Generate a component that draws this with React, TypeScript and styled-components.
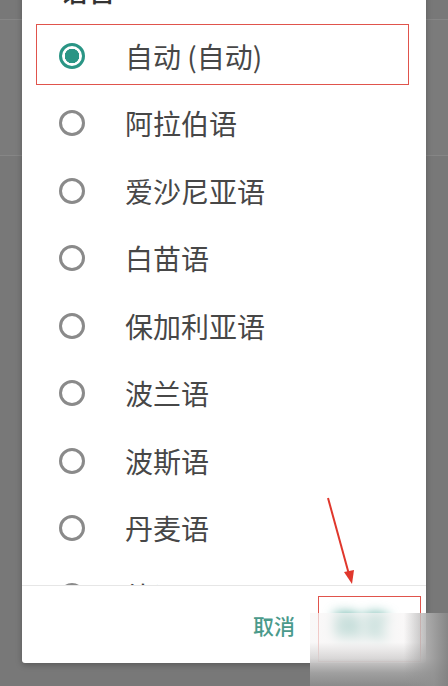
import { createGlobalStyle, styled } from "styled-components";

const GlobalStyle = createGlobalStyle`
  html, body {
    margin: 0;
    padding: 0;
    background: #787878;
  }
  body {
    font-family: "Noto Sans CJK SC", "Noto Sans", sans-serif;
  }
`;

const LANGUAGES = [
  "自动 (自动)",
  "阿拉伯语",
  "爱沙尼亚语",
  "白苗语",
  "保加利亚语",
  "波兰语",
  "波斯语",
  "丹麦语",
  "德语",
];

const App = () => {
  const selected = 0;

  return (
    <St.Page>
      <GlobalStyle />
      <St.Backdrop>
        <St.BackRow />
      </St.Backdrop>
      <St.Dialog>
        <St.Title>语言</St.Title>
        <St.List>
          {LANGUAGES.map((name, idx) => (
            <St.Row key={name} $marked={idx === selected}>
              <St.Radio $checked={idx === selected} />
              <St.Label>{name}</St.Label>
            </St.Row>
          ))}
        </St.List>
        <St.Footer>
          <St.TextButton>取消</St.TextButton>
          <St.TextButton $wide $marked>
            <St.Smudged>确定</St.Smudged>
          </St.TextButton>
        </St.Footer>
      </St.Dialog>

      {/* 스크린샷 위에 그려진 빨간 화살표 */}
      <St.Arrow width="40" height="100" viewBox="0 0 40 100">
        <line x1="6" y1="6" x2="28" y2="86" stroke="#e0372c" strokeWidth="2" />
        <polygon points="22,80 32,78 30,92" fill="#e0372c" />
      </St.Arrow>
      <St.Watermark />
    </St.Page>
  );
};

export default App;

const St = {
  Page: styled.div`
    position: relative;
    width: 448px;
    height: 686px;
    overflow: hidden;
    background: #787878;
  `,
  Backdrop: styled.div`
    position: absolute;
    inset: 0;
    padding-top: 19px;
  `,
  BackRow: styled.div`
    height: 135px;
    border-top: 1px solid #868686;
    border-bottom: 1px solid #868686;
    background: #7b7b7b;
  `,
  Dialog: styled.section`
    position: relative;
    margin: -38px 0 0 22px;
    width: 404px;
    height: 701px;
    background: #fff;
    border-radius: 3px;
    box-shadow: 0 2px 6px rgba(0, 0, 0, 0.25);
    display: flex;
    flex-direction: column;
  `,
  Title: styled.h2`
    margin: 0;
    height: 60px;
    padding: 14px 0 0 38px;
    box-sizing: border-box;
    font-size: 28px;
    font-weight: 500;
    line-height: 1;
    color: #333;
  `,
  List: styled.div`
    height: 563px;
    overflow: hidden;
    display: flex;
    flex-direction: column;
  `,
  Row: styled.div<{ $marked?: boolean }>`
    position: relative;
    flex: none;
    height: 67.5px;
    display: flex;
    align-items: center;
    padding-left: 37px;

    &::after {
      content: "";
      display: ${({ $marked }) => ($marked ? "block" : "none")};
      position: absolute;
      left: 14px;
      right: 17px;
      top: 2px;
      bottom: 5px;
      border: 1.5px solid #e0544c;
    }
  `,
  Radio: styled.span<{ $checked?: boolean }>`
    flex: none;
    width: 26px;
    height: 26px;
    box-sizing: border-box;
    border-radius: 50%;
    border: 3px solid ${({ $checked }) => ($checked ? "#2a9585" : "#8a8a8a")};
    background: ${({ $checked }) =>
      $checked ? "radial-gradient(circle, #2a9585 0 7px, transparent 7.5px)" : "none"};
  `,
  Label: styled.span`
    margin-left: 40px;
    font-size: 28px;
    color: #474747;
    line-height: 1;
  `,
  Footer: styled.footer`
    border-top: 1px solid #e6e6e6;
    display: flex;
    justify-content: flex-end;
    padding: 10px 5px 0 0;
    height: 78px;
    box-sizing: border-box;
  `,
  TextButton: styled.button<{ $wide?: boolean; $marked?: boolean }>`
    width: ${({ $wide }) => ($wide ? "103px" : "88px")};
    height: 66px;
    background: none;
    border: ${({ $marked }) => ($marked ? "1.5px solid #e0544c" : "none")};
    font-family: inherit;
    font-size: 21px;
    font-weight: 500;
    color: #4a9a8b;
    padding: 0 0 8px;
  `,
  Smudged: styled.span`
    display: inline-block;
    margin-right: 16px;
    filter: blur(6px);
    font-size: 28px;
    font-weight: 900;
    color: #2a9585;
  `,
  Arrow: styled.svg`
    position: absolute;
    left: 322px;
    top: 492px;
  `,
  Watermark: styled.div`
    position: absolute;
    left: 310px;
    top: 613px;
    width: 138px;
    height: 73px;
    background:
      linear-gradient(
        to right,
        rgba(150, 150, 150, 0) 0%,
        rgba(150, 150, 150, 0) 68%,
        rgba(145, 145, 145, 0.8) 90%,
        rgba(130, 130, 130, 0.95) 100%
      ),
      linear-gradient(
        to bottom,
        rgba(247, 245, 245, 0.7) 0%,
        rgba(247, 245, 245, 0.75) 40%,
        rgba(215, 213, 213, 0.95) 62%,
        rgba(160, 160, 160, 1) 82%,
        rgba(138, 138, 138, 1) 100%
      );
  `,
};
